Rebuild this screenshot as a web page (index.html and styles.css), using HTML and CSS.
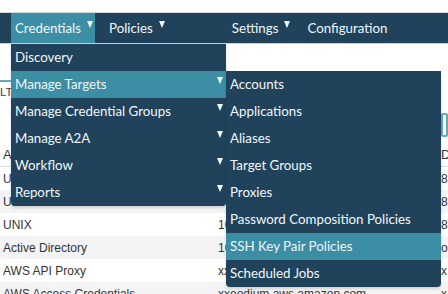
FILE: index.html
```html
<!DOCTYPE html>
<html lang="en">
<head>
  <meta charset="UTF-8" />
  <meta name="viewport" content="width=device-width, initial-scale=1.0" />
  <title>Credentials</title>
  <link rel="stylesheet" href="styles.css">
</head>
<body>

  <div class="topstrip"></div>

  <nav class="navbar">
    <div class="nav-item nav-credentials active">Credentials <span class="caret"></span></div>
    <div class="nav-item nav-policies">Policies <span class="caret"></span></div>
    <div class="nav-item nav-settings">Settings <span class="caret"></span></div>
    <div class="nav-item nav-config">Configuration</div>
  </nav>

  <main class="page">
    <div class="filter-box">LTER</div>

    <div class="toolbar">
      <div></div>
      <div></div>
      <div class="search-box"></div>
    </div>

    <div class="grid-table">
      <div class="row head"><div>Asset Type</div><div>Network Address</div><div>Domain</div></div>
      <div class="row"><div>Unix Server</div><div>10.5.32.18</div><div>8</div></div>
      <div class="row alt"><div>Unix Host</div><div>10.5.32.19</div><div>8</div></div>
      <div class="row"><div>UNIX</div><div>10.5.32.20</div><div>8</div></div>
      <div class="row alt"><div>Active Directory</div><div>10.5.33.4</div><div>oi</div></div>
      <div class="row"><div>AWS API Proxy</div><div>xxeodium.aws.amazon.com</div><div>x</div></div>
      <div class="row alt"><div>AWS Access Credentials</div><div>xxeodium.aws.amazon.com</div><div>x</div></div>
    </div>
  </main>

  <!-- Credentials dropdown -->
  <ul class="dropdown menu-main">
    <li>Discovery</li>
    <li class="active">Manage Targets <span class="caret"></span></li>
    <li>Manage Credential Groups <span class="caret"></span></li>
    <li>Manage A2A <span class="caret"></span></li>
    <li>Workflow <span class="caret"></span></li>
    <li>Reports <span class="caret"></span></li>
  </ul>

  <!-- Manage Targets submenu -->
  <ul class="dropdown menu-sub">
    <li>Accounts</li>
    <li>Applications</li>
    <li>Aliases</li>
    <li>Target Groups</li>
    <li>Proxies</li>
    <li>Password Composition Policies</li>
    <li class="active">SSH Key Pair Policies</li>
    <li>Scheduled Jobs</li>
  </ul>

</body>
</html>
```

FILE: styles.css
```css
:root { --navy: #20435b; --teal: #3b8ea3; --menu-text: #f2f6f8; }
* { box-sizing: border-box; }
body { margin: 0; width: 448px; height: 294px; overflow: hidden; background: #fff; font-family: 'Liberation Sans', Arial, sans-serif; color: #333; position: relative; }

.topstrip { height: 13px; border-bottom: 1px solid #d4d8db; }

.navbar { height: 31px; background: var(--navy); border-bottom: 1px solid #c5d0d7; display: flex; align-items: stretch; font-family: Lato, 'Open Sans', sans-serif; font-size: 13.3px; color: var(--menu-text); }
.nav-item { display: flex; align-items: center; padding: 0 3px 1px 4px; white-space: nowrap; }
.nav-item.active { background: var(--teal); }
.nav-credentials { margin-left: 11px; width: 84px; }
.nav-policies { margin-left: 10px; }
.nav-settings { margin-left: 60px; }
.nav-config { margin-left: 10px; }

.caret { display: inline-block; width: 0; height: 0; border-left: 3.5px solid transparent; border-right: 3.5px solid transparent; border-top: 7px solid var(--menu-text); margin-left: 6px; margin-bottom: 6px; }

.page { font-size: 12px; }
.filter-box { margin-top: 36px; height: 20px; width: 200px; border-top: 2px solid #63aabb; font-size: 11.5px; line-height: 20px; color: #444; }

.toolbar { display: grid; grid-template-columns: 218px 223px 1fr; margin-top: 13px; }
.search-box { height: 24px; border: 2px solid #63aabb; border-radius: 2px; }

.grid-table { margin-top: 5px; }
.row { display: grid; grid-template-columns: 218px 223px 1fr; height: 23px; align-items: center; white-space: nowrap; overflow: hidden; }
.row > div { overflow: hidden; }
.row > div:first-child { padding-left: 3px; }
.row.head { height: 25px; border-bottom: 1px solid #dcdcdc; font-size: 13px; }
.row.alt { background: #f4f4f4; }

.dropdown { position: absolute; margin: 0; padding: 0; list-style: none; background: var(--navy); font-family: Lato, 'Open Sans', sans-serif; font-size: 13.3px; color: var(--menu-text); border-radius: 0 0 4px 4px; overflow: hidden; box-shadow: 0 2px 3px rgba(0, 0, 0, 0.15); }
.dropdown li { height: 27px; display: flex; align-items: center; justify-content: space-between; padding: 0 3px 2px 4px; white-space: nowrap; }
.dropdown li.active { background: var(--teal); }
.dropdown .caret { margin-bottom: 7px; }
.menu-main { top: 44px; left: 11px; width: 215px; }
.menu-sub { top: 71px; left: 226px; width: 215px; }
```
